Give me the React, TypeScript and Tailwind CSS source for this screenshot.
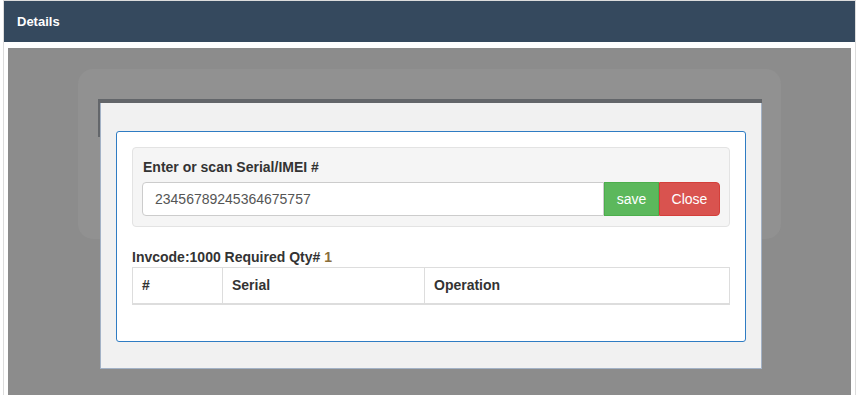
// App.tsx
import React from "react";

// Columns of the serial table
const COLUMNS = [
  { label: "#", width: "w-[90px]" },
  { label: "Serial", width: "w-[202px]" },
  { label: "Operation", width: "" },
];

export default function App() {
  const font = { fontFamily: '"Liberation Sans", Arial, sans-serif' };

  return (
    <div style={font} className="min-h-[395px] bg-white text-[#333]">
      <div className="ml-[3px] w-[853px] border border-[#dcdcdc]">
        {/* Header */}
        <div className="flex h-[41px] items-center bg-[#35495e] px-[13px] text-[13px] font-bold text-white">
          Details
        </div>

        {/* Body */}
        <div className="px-[4px] pt-[6px]">
          <div className="relative h-[360px] bg-[#8c8c8c] pl-[70px] pt-[21px]">
            {/* Faded backdrop card */}
            <div className="h-[170px] w-[703px] rounded-[15px] bg-[#919191]" />

            {/* Modal */}
            <div className="absolute left-[90px] top-[51px] w-[664px]">
              <div className="h-[38px] bg-[#63666a]" />
              <div className="-mt-[34px] ml-[2px] border border-t-0 border-[#a3b2c6] bg-[#f1f1f1] px-[15px] pb-[26px] pt-[28px]">
                <div className="rounded-[3px] border border-[#2f7cc3] bg-white p-[15px] pb-[16px]">
                  {/* Scan well */}
                  <div className="rounded-[4px] border border-[#e3e3e3] bg-[#f5f5f5] px-[9px] pb-[10px] pt-[9px]">
                    <div className="mb-[5px] pl-[1px] text-[14px] leading-[20px] font-bold">
                      Enter or scan Serial/IMEI #
                    </div>
                    <div className="flex h-[34px]">
                      <input
                        readOnly
                        value="23456789245364675757"
                        style={font}
                        className="h-[34px] min-w-0 flex-1 rounded-l-[4px] border border-[#ccc] bg-white px-[12px] text-[14px] text-[#555] outline-none"
                      />
                      <button className="h-[34px] w-[55px] border border-[#4cae4c] bg-[#5cb85c] text-[14px] text-white">
                        save
                      </button>
                      <button className="h-[34px] w-[61px] rounded-r-[4px] border border-[#d43f3a] bg-[#d9534f] text-[14px] text-white">
                        Close
                      </button>
                    </div>
                  </div>

                  {/* Invoice line */}
                  <div className="mt-[20px] text-[14px] leading-[20px] font-bold">
                    Invcode:1000 Required Qty# <span className="text-[#8a6d3b]">1</span>
                  </div>

                  {/* Table */}
                  <div className="mb-[20px] flex h-[38px] border border-b-2 border-[#ddd] text-[14px] font-bold">
                    {COLUMNS.map((col, i) => (
                      <div
                        key={col.label}
                        className={`flex items-center px-[9px] ${col.width || "flex-1"} ${i < COLUMNS.length - 1 ? "border-r border-[#ddd]" : ""}`}
                      >
                        {col.label}
                      </div>
                    ))}
                  </div>
                </div>
              </div>
            </div>
          </div>
        </div>
      </div>
    </div>
  );
}
